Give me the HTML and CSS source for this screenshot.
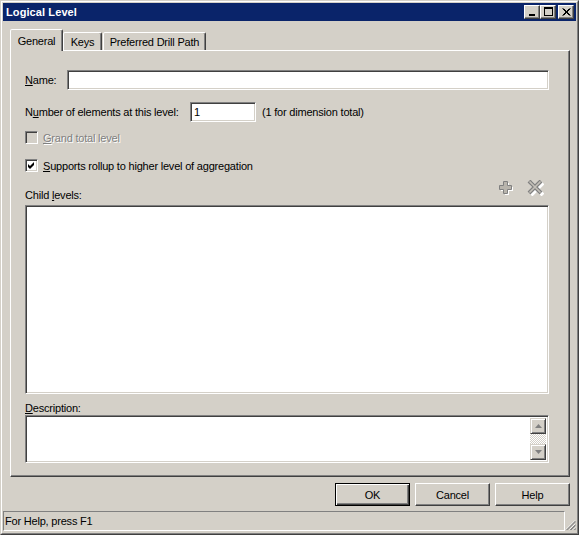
FILE: index.html
```html
<!DOCTYPE html>
<html>
<head>
<meta charset="utf-8">
<link rel="stylesheet" href="styles.css">
</head>
<body>
<div class="window">
  <div class="frame">
    <div class="titlebar">
      <span class="title">Logical Level</span>
      <div class="tbtns">
        <div class="tbtn"><svg width="14" height="12" viewBox="0 0 14 12"><rect x="4" y="8" width="6" height="2" fill="#000"/></svg></div>
        <div class="tbtn"><svg width="14" height="12" viewBox="0 0 14 12"><rect x="3.5" y="1.5" width="8" height="8" fill="none" stroke="#000"/><rect x="3" y="1" width="9" height="2" fill="#000"/></svg></div>
        <div class="tbtn close"><svg width="14" height="12" viewBox="0 0 14 12"><path d="M3.5 2.5 L10.5 9.5 M4.5 2.5 L11.5 9.5 M10.5 2.5 L3.5 9.5 M11.5 2.5 L4.5 9.5" stroke="#000" stroke-width="1"/></svg></div>
      </div>
    </div>
    <div class="body">
      <div class="tabs">
        <div class="tab active tab-general">General</div>
        <div class="tab tab-keys">Keys</div>
        <div class="tab tab-drill">Preferred Drill Path</div>
      </div>
      <div class="panel">
        <div class="row name-row">
          <label class="lbl name-lbl"><u>N</u>ame:</label>
          <div class="field grow"></div>
        </div>
        <div class="row num-row">
          <label class="lbl num-lbl">N<u>u</u>mber of elements at this level:</label>
          <div class="field num-field"><span class="val">1</span></div>
          <span class="hint">(1 for dimension total)</span>
        </div>
        <div class="check-row grand">
          <div class="cbox disabled"></div>
          <span class="lbl disabled-text"><u>G</u>rand total level</span>
        </div>
        <div class="check-row supports">
          <div class="cbox"><svg width="9" height="9" viewBox="0 0 9 9"><path d="M1 3 L3 5 L7 1 L7 4 L3 8 L1 6 Z" fill="#000"/></svg></div>
          <span class="lbl"><u>S</u>upports rollup to higher level of aggregation</span>
        </div>
        <div class="child-head">
          <span class="lbl">Child <u>l</u>evels:</span>
          <div class="icons">
            <svg class="ico" width="16" height="16" viewBox="0 0 16 16">
              <path d="M7 2h4v4h4v4h-4v4H7v-4H3V6h4z" fill="#fff" transform="translate(1,1)"/>
              <path d="M6.5 1.5h4v4h4v4h-4v4h-4v-4h-4v-4h4z" fill="#b8b4ac" stroke="#808080"/>
            </svg>
            <svg class="ico" width="17" height="16" viewBox="0 0 17 16">
              <path d="M3 2 L15 14 M15 2 L3 14" stroke="#fff" stroke-width="4" transform="translate(1,1)"/>
              <path d="M2 1 L14 13 M14 1 L2 13" stroke="#808080" stroke-width="4"/>
              <path d="M2.5 1.5 L13.5 12.5 M13.5 1.5 L2.5 12.5" stroke="#c4c0b8" stroke-width="1.6"/>
            </svg>
          </div>
        </div>
        <div class="field list"></div>
        <div class="lbl desc-lbl"><u>D</u>escription:</div>
        <div class="field desc">
          <div class="scroll">
            <div class="sbtn"><svg width="7" height="4" viewBox="0 0 7 4"><path d="M3.5 0 L7 4 H0 Z" fill="#808080"/></svg></div>
            <div class="track"></div>
            <div class="sbtn"><svg width="7" height="4" viewBox="0 0 7 4"><path d="M0 0 H7 L3.5 4 Z" fill="#808080"/></svg></div>
          </div>
        </div>
      </div>
      <div class="buttons">
        <div class="btn default"><span>OK</span></div>
        <div class="btn"><span>Cancel</span></div>
        <div class="btn"><span>Help</span></div>
      </div>
    </div>
    <div class="status">
      <div class="status-pane">For Help, press F1</div>
      <div class="grip"><svg width="12" height="12" viewBox="0 0 12 12">
        <path d="M11 1 L1 11 M11 5 L5 11 M11 9 L9 11" stroke="#fff" stroke-width="1"/>
        <path d="M11.5 1.5 L1.5 11.5 M11.5 2.5 L2.5 11.5 M11.5 5.5 L5.5 11.5 M11.5 6.5 L6.5 11.5 M11.5 9.5 L9.5 11.5 M11.5 10.5 L10.5 11.5" stroke="#808080" stroke-width="1"/>
      </svg></div>
    </div>
  </div>
</div>
</body>
</html>
```

FILE: styles.css
```css
html, body {
  margin: 0;
  padding: 0;
  background: #d4d0c8;
}
body {
  font-family: "Liberation Sans", Arial, sans-serif;
  font-size: 11px;
  letter-spacing: -0.2px;
  color: #000;
}
.window {
  width: 579px;
  height: 535px;
  box-sizing: border-box;
  border: 1px solid;
  border-color: #d4d0c8 #404040 #404040 #d4d0c8;
  background: #d4d0c8;
}
.frame {
  height: 100%;
  box-sizing: border-box;
  border: 1px solid;
  border-color: #fff #808080 #808080 #fff;
  padding: 1px;
  display: flex;
  flex-direction: column;
}
.titlebar {
  height: 18px;
  flex: none;
  background: #0a246a;
  display: flex;
  align-items: center;
  justify-content: space-between;
  padding: 0 2px 0 3px;
}
.title {
  color: #fff;
  font-weight: bold;
  font-size: 11px;
  letter-spacing: 0.1px;
}
.tbtns {
  display: flex;
  align-items: center;
}
.tbtn {
  width: 16px;
  height: 14px;
  box-sizing: border-box;
  background: #d4d0c8;
  border: 1px solid;
  border-color: #fff #404040 #404040 #fff;
  box-shadow: inset -1px -1px #808080;
  display: flex;
  align-items: center;
  justify-content: center;
}
.tbtn.close {
  margin-left: 2px;
}
.body {
  flex: none;
  padding: 8px 6px 0 7px;
}
.tabs {
  height: 21px;
  display: flex;
  align-items: flex-end;
}
.tab {
  height: 18px;
  box-sizing: border-box;
  border: 1px solid;
  border-bottom: none;
  border-color: #fff #404040 transparent #fff;
  box-shadow: inset -1px 0 #808080;
  border-radius: 2px 2px 0 0;
  padding-top: 3px;
  text-align: center;
  background: #d4d0c8;
  white-space: nowrap;
}
.tab + .tab {
  margin-left: 1px;
}
.tab.active {
  height: 22px;
  margin-bottom: -1px;
  padding-top: 5px;
  position: relative;
  z-index: 1;
}
.tab.active + .tab {
  margin-left: 0;
}
.tab-general {
  width: 53px;
}
.tab-keys {
  width: 39px;
}
.tab-drill {
  width: 103px;
}
.panel {
  height: 427px;
  box-sizing: border-box;
  border: 1px solid;
  border-color: #fff #404040 #404040 #fff;
  box-shadow: inset -1px -1px #808080;
  padding: 19px 20px 0 14px;
  display: flex;
  flex-direction: column;
}
.row {
  display: flex;
  align-items: center;
  height: 20px;
}
.num-row {
  margin-top: 12px;
}
.name-lbl {
  width: 42px;
  flex: none;
}
.num-lbl {
  width: 165px;
  flex: none;
}
.field {
  box-sizing: border-box;
  background: #fff;
  border: 1px solid;
  border-color: #808080 #fff #fff #808080;
  box-shadow: inset 1px 1px #404040, inset -1px -1px #d4d0c8;
}
.grow {
  flex: 1;
  height: 20px;
}
.num-field {
  width: 66px;
  height: 20px;
  display: flex;
  align-items: center;
  padding-left: 3px;
}
.hint {
  margin-left: 6px;
}
.check-row {
  display: flex;
  align-items: center;
  height: 13px;
}
.grand {
  margin-top: 9px;
}
.supports {
  margin-top: 15px;
}
.cbox {
  width: 13px;
  height: 13px;
  box-sizing: border-box;
  background: #fff;
  border: 1px solid;
  border-color: #808080 #fff #fff #808080;
  box-shadow: inset 1px 1px #404040, inset -1px -1px #d4d0c8;
  margin-right: 5px;
  display: flex;
  align-items: center;
  justify-content: center;
  flex: none;
}
.cbox.disabled {
  background: #d4d0c8;
}
.disabled-text {
  color: #808080;
  text-shadow: 1px 1px #fff;
}
.child-head {
  margin-top: 6px;
  height: 24px;
  display: flex;
  align-items: flex-end;
  justify-content: space-between;
}
.child-head .lbl {
  line-height: 13px;
}
.icons {
  display: flex;
  align-self: flex-start;
  gap: 14px;
  margin-right: 5px;
  margin-top: 2px;
}
.list {
  margin-top: 3px;
  height: 189px;
}
.desc-lbl {
  margin-top: 8px;
  line-height: 13px;
}
.desc {
  height: 48px;
  display: flex;
  justify-content: flex-end;
  padding: 2px;
}
.scroll {
  width: 16px;
  display: flex;
  flex-direction: column;
}
.sbtn {
  width: 16px;
  height: 16px;
  box-sizing: border-box;
  background: #d4d0c8;
  border: 1px solid;
  border-color: #d4d0c8 #404040 #404040 #d4d0c8;
  box-shadow: inset 1px 1px #fff, inset -1px -1px #808080;
  display: flex;
  align-items: center;
  justify-content: center;
  flex: none;
}
.track {
  flex: 1;
  background: repeating-conic-gradient(#d4d0c8 0 25%, #fff 0 50%) 0 0 / 2px 2px;
}
.buttons {
  margin-top: 6px;
  display: flex;
  justify-content: flex-end;
  gap: 5px;
}
.btn {
  width: 75px;
  height: 23px;
  box-sizing: border-box;
  border: 1px solid;
  border-color: #fff #404040 #404040 #fff;
  box-shadow: inset -1px -1px #808080;
  display: flex;
  align-items: center;
  justify-content: center;
}
.btn.default {
  border: 1px solid #000;
  box-shadow: inset 1px 1px #fff, inset -1px -1px #404040, inset -2px -2px #808080;
}
.status {
  margin-top: 5px;
  height: 20px;
  display: flex;
}
.status-pane {
  flex: 1;
  box-sizing: border-box;
  border: 1px solid;
  border-color: #808080 #fff #fff #808080;
  padding-left: 1px;
  display: flex;
  align-items: center;
}
.grip {
  width: 11px;
  display: flex;
  align-items: flex-end;
  justify-content: flex-end;
}
```
